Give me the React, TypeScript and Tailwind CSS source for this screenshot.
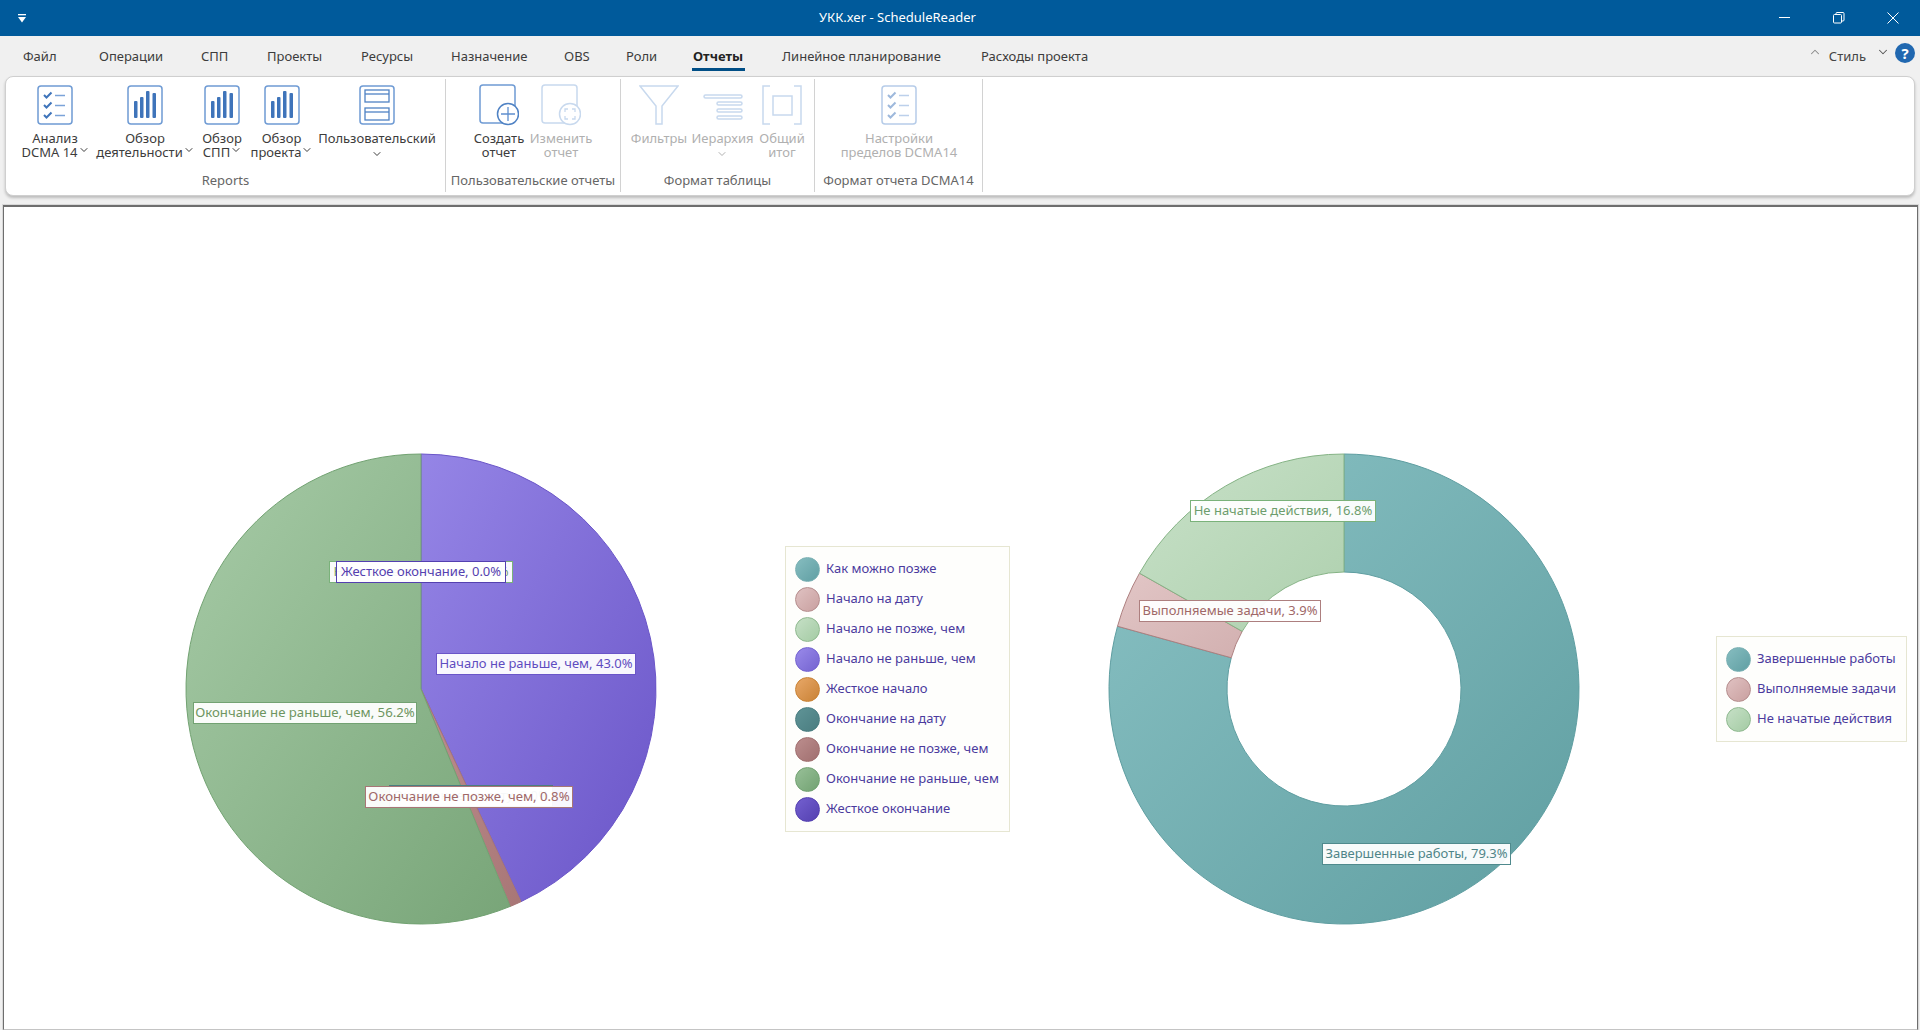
import { ChevronDown, ChevronUp } from 'lucide-react'

const FONT = "font-['Noto_Sans','Open_Sans',sans-serif]"

function polar(cx: number, cy: number, r: number, pct: number) {
    const a = (pct / 100) * Math.PI * 2
    return [cx + r * Math.sin(a), cy - r * Math.cos(a)]
}

function slicePath(from: number, to: number, r: number, inner = 0) {
    const c = 236
    const large = to - from > 50 ? 1 : 0
    const [x1, y1] = polar(c, c, r, from)
    const [x2, y2] = polar(c, c, r, to)
    if (!inner) return `M${c} ${c}L${x1} ${y1}A${r} ${r} 0 ${large} 1 ${x2} ${y2}Z`
    const [x3, y3] = polar(c, c, inner, to)
    const [x4, y4] = polar(c, c, inner, from)
    return `M${x1} ${y1}A${r} ${r} 0 ${large} 1 ${x2} ${y2}L${x3} ${y3}A${inner} ${inner} 0 ${large} 0 ${x4} ${y4}Z`
}

function Grad({ id, a, b }: { id: string; a: string; b: string }) {
    return (
        <linearGradient id={id} x1="0" y1="0" x2="1" y2="1">
            <stop offset="0" stopColor={a} />
            <stop offset="1" stopColor={b} />
        </linearGradient>
    )
}

function ChecklistIcon({ faded }: { faded?: boolean }) {
    return (
        <svg width="36" height="40" viewBox="0 0 36 40" fill="none" className={faded ? 'opacity-50' : ''}>
            <rect x="1" y="1" width="34" height="38" rx="3" stroke="#6f9bd4" strokeWidth="1.5" />
            {[10, 20, 30].map((y) => (
                <g key={y}>
                    <path d={`M7 ${y}l2.5 2.5 5-5`} stroke="#3f74ba" strokeWidth="2" />
                    <path d={`M18 ${y + 0.5}h10`} stroke="#7ba3d8" strokeWidth="1.5" />
                </g>
            ))}
        </svg>
    )
}

function BarsIcon() {
    return (
        <svg width="36" height="40" viewBox="0 0 36 40" fill="none">
            <rect x="1" y="1" width="34" height="38" rx="3" stroke="#6f9bd4" strokeWidth="1.5" />
            <rect x="7" y="16" width="3.5" height="17" rx="1" fill="#3f74ba" />
            <rect x="13" y="12" width="3.5" height="21" rx="1" fill="#3f74ba" />
            <rect x="19" y="6" width="3.5" height="27" rx="1" fill="#3f74ba" />
            <rect x="25.5" y="8" width="3.5" height="25" rx="1" fill="#3f74ba" />
        </svg>
    )
}

function TableIcon() {
    return (
        <svg width="36" height="40" viewBox="0 0 36 40" fill="none">
            <rect x="1" y="1" width="34" height="38" rx="3" stroke="#6f9bd4" strokeWidth="1.5" />
            <rect x="6" y="5" width="24" height="12" stroke="#4f82c4" strokeWidth="1.3" />
            <path d="M6 9h24" stroke="#4f82c4" strokeWidth="1.3" />
            <rect x="6" y="23" width="24" height="12" stroke="#4f82c4" strokeWidth="1.3" />
            <path d="M6 27h24" stroke="#4f82c4" strokeWidth="1.3" />
        </svg>
    )
}

function NewReportIcon() {
    return (
        <svg width="40" height="42" viewBox="0 0 40 42" fill="none">
            <rect x="1" y="1" width="35" height="38" rx="3" stroke="#6f9bd4" strokeWidth="1.5" />
            <circle cx="29" cy="30" r="10.5" fill="#fff" stroke="#4f82c4" strokeWidth="1.5" />
            <path d="M29 23v14M22 30h14" stroke="#5f8fce" strokeWidth="1.3" />
        </svg>
    )
}

function EditReportIcon() {
    return (
        <svg width="40" height="42" viewBox="0 0 40 42" fill="none">
            <rect x="1" y="1" width="35" height="38" rx="3" stroke="#c8d9ee" strokeWidth="1.5" />
            <circle cx="29" cy="30" r="10.5" fill="#fff" stroke="#c8d9ee" strokeWidth="1.5" />
            <path d="M24 28v-3h3M31 25h3v3M34 32v3h-3M27 35h-3v-3" stroke="#c8d9ee" strokeWidth="1.3" />
        </svg>
    )
}

function FilterIcon() {
    return (
        <svg width="40" height="40" viewBox="0 0 40 40" fill="none">
            <path d="M1 1h38L23 21v18h-6V21z" stroke="#c8d9ee" strokeWidth="1.5" />
        </svg>
    )
}

function HierarchyIcon() {
    return (
        <svg width="40" height="40" viewBox="0 0 40 40" fill="none" stroke="#c8d9ee" strokeWidth="1.5">
            <rect x="1" y="10" width="38" height="3" rx="1.5" />
            <rect x="14" y="17" width="25" height="3" rx="1.5" />
            <rect x="14" y="24" width="25" height="3" rx="1.5" />
            <rect x="14" y="31" width="25" height="3" rx="1.5" />
        </svg>
    )
}

function TotalIcon() {
    return (
        <svg width="40" height="40" viewBox="0 0 40 40" fill="none" stroke="#c8d9ee" strokeWidth="1.5">
            <path d="M8 1H1v38h7M32 1h7v38h-7" />
            <rect x="11" y="11" width="19" height="19" />
        </svg>
    )
}

type RibbonButton = {
    width: string
    icon: React.ReactNode
    lines: string[]
    arrow?: 'inline' | 'below'
    faded?: boolean
}

function Button({ b }: { b: RibbonButton }) {
    const color = b.faded ? 'text-[#b0b0b0]' : 'text-[#3c3c3c]'
    return (
        <div className={`flex flex-col items-center shrink-0 ${b.width}`}>
            <div className="h-[40px] flex items-center justify-center">{b.icon}</div>
            <div className={`mt-[6px] text-[13px] leading-[14px] text-center whitespace-nowrap ${color}`}>
                {b.lines.map((line, i) => (
                    <div key={line} className="flex items-center justify-center">
                        {line}
                        {b.arrow === 'inline' && i === b.lines.length - 1 && (
                            <ChevronDown className="w-[12px] h-[12px] -mt-[4px] -mr-[1px]" strokeWidth={2} />
                        )}
                    </div>
                ))}
                {b.arrow === 'below' && (
                    <div className="flex justify-center">
                        <ChevronDown className="w-[12px] h-[12px] mt-[3px]" strokeWidth={2} />
                    </div>
                )}
            </div>
        </div>
    )
}

function Group({ width, px, label, buttons }: { width: string; px: string; label: string; buttons: RibbonButton[] }) {
    return (
        <div className={`h-[113px] border-r border-[#d2d2d2] flex flex-col shrink-0 ${width}`}>
            <div className={`flex pt-[6px] h-[92px] ${px}`}>
                {buttons.map((b) => (
                    <Button key={b.lines.join()} b={b} />
                ))}
            </div>
            <div className="text-[13px] leading-[18px] text-center text-[#666] whitespace-nowrap">{label}</div>
        </div>
    )
}

const legendA = [
    { name: 'Как можно позже', c: 'from-[#86bdc0] to-[#609fa3] border-[#7ab0b3]' },
    { name: 'Начало на дату', c: 'from-[#e0c2c2] to-[#c9a0a0] border-[#b58d8d]' },
    { name: 'Начало не позже, чем', c: 'from-[#c6e0c6] to-[#a4cba4] border-[#8fb98f]' },
    { name: 'Начало не раньше, чем', c: 'from-[#9a8aea] to-[#7463d0] border-[#7463d0]' },
    { name: 'Жесткое начало', c: 'from-[#e8a868] to-[#c98234] border-[#c98234]' },
    { name: 'Окончание на дату', c: 'from-[#5f9497] to-[#4a7d80] border-[#4a7d80]' },
    { name: 'Окончание не позже, чем', c: 'from-[#bc8e8e] to-[#a06f6f] border-[#a06f6f]' },
    { name: 'Окончание не раньше, чем', c: 'from-[#98c098] to-[#72a272] border-[#72a272]' },
    { name: 'Жесткое окончание', c: 'from-[#7460d0] to-[#5440b0] border-[#5440b0]' },
]

const legendB = [
    { name: 'Завершенные работы', c: 'from-[#86bdc0] to-[#609fa3] border-[#7ab0b3]' },
    { name: 'Выполняемые задачи', c: 'from-[#e0c2c2] to-[#c9a0a0] border-[#b58d8d]' },
    { name: 'Не начатые действия', c: 'from-[#c6e0c6] to-[#a4cba4] border-[#8fb98f]' },
]

function Legend({ items, width, ml }: { items: { name: string; c: string }[]; width: string; ml: string }) {
    return (
        <div className={`shrink-0 border border-[#e6e6d2] bg-[#fefefc] px-[9px] py-[7px] ${width} ${ml}`}>
            {items.map((it) => (
                <div key={it.name} className="h-[30px] flex items-center gap-[6px]">
                    <div className={`w-[25px] h-[25px] rounded-full border bg-gradient-to-br ${it.c}`} />
                    <span className="text-[13px] text-[#4b3b9e] whitespace-nowrap">{it.name}</span>
                </div>
            ))}
        </div>
    )
}

function Label({ text, c }: { text: string; c: string }) {
    return (
        <div className={`absolute h-[22px] flex items-center justify-center bg-white/95 border whitespace-nowrap overflow-hidden ${c}`}>
            {text}
        </div>
    )
}

export default function App() {
    return (
        <div className={`w-[1920px] h-[1030px] overflow-hidden flex flex-col bg-[#f0f0f0] ${FONT}`}>
            {/* title bar */}
            <div className="h-[36px] shrink-0 bg-[#005a9b] flex items-center text-white">
                <svg width="8" height="9" viewBox="0 0 8 9" className="ml-[18px]" fill="#fff">
                    <rect x="0" y="0" width="8" height="1.3" />
                    <path d="M0 3h8L4 8.5z" />
                </svg>
                <div className="ml-[793px] text-[13px] whitespace-nowrap">УКК.xer - ScheduleReader</div>
                <div className="ml-auto flex items-center">
                    <svg width="12" height="12" viewBox="0 0 12 12" stroke="#fff" fill="none">
                        <path d="M0 5.5h11" />
                    </svg>
                    <svg width="12" height="12" viewBox="0 0 12 12" stroke="#fff" fill="none" className="ml-[42px]">
                        <rect x="0.5" y="2.5" width="8" height="8.5" rx="1" />
                        <path d="M3 2.5V1.5a1 1 0 0 1 1-1h6a1 1 0 0 1 1 1v6.5a1 1 0 0 1-1 1H8.5" />
                    </svg>
                    <svg width="12" height="12" viewBox="0 0 12 12" stroke="#fff" fill="none" className="ml-[42px] mr-[21px]">
                        <path d="M0.5 0.5l11 11M11.5 0.5l-11 11" />
                    </svg>
                </div>
            </div>

            {/* menu row */}
            <div className="h-[40px] shrink-0 flex items-center text-[13px] text-[#3c3c3c] pl-[23px] pt-[1px]">
                <span className="w-[76px]">Файл</span>
                <span className="w-[102px]">Операции</span>
                <span className="w-[66px]">СПП</span>
                <span className="w-[94px]">Проекты</span>
                <span className="w-[90px]">Ресурсы</span>
                <span className="w-[113px]">Назначение</span>
                <span className="w-[62px]">OBS</span>
                <span className="w-[67px]">Роли</span>
                <span className="relative w-[89px] font-bold text-[#222]">
                    Отчеты
                    <span className="absolute left-[-1px] top-[21px] w-[53px] h-[3px] bg-[#004e86]" />
                </span>
                <span className="w-[199px]">Линейное планирование</span>
                <span>Расходы проекта</span>
                <div className="ml-auto flex items-center text-[#555]">
                    <ChevronUp className="w-[14px] h-[14px] -mt-[10px] text-[#888]" strokeWidth={1.75} />
                    <span className="ml-[7px] mt-[1px] text-[13px] text-[#444]">Стиль</span>
                    <ChevronDown className="w-[14px] h-[14px] ml-[10px] -mt-[10px]" strokeWidth={1.75} />
                    <div className="ml-[5px] mr-[5px] -mt-[7px] w-[20px] h-[20px] rounded-full bg-[#2168b0] text-white text-[15px] font-bold leading-[20px] text-center">?</div>
                </div>
            </div>

            {/* ribbon */}
            <div className="h-[120px] shrink-0 ml-[5px] mr-[5px] bg-white border border-[#cfcfcf] rounded-[8px] shadow-[0_2px_3px_rgba(0,0,0,0.22)] flex pt-[2px]">
                <Group
                    width="w-[440px]"
                    px="pl-[8px]"
                    label="Reports"
                    buttons={[
                        { width: 'w-[82px]', icon: <ChecklistIcon />, lines: ['Анализ', 'DCMA 14'], arrow: 'inline' },
                        { width: 'w-[98px]', icon: <BarsIcon />, lines: ['Обзор', 'деятельности'], arrow: 'inline' },
                        { width: 'w-[56px]', icon: <BarsIcon />, lines: ['Обзор', 'СПП'], arrow: 'inline' },
                        { width: 'w-[63px]', icon: <BarsIcon />, lines: ['Обзор', 'проекта'], arrow: 'inline' },
                        { width: 'w-[128px]', icon: <TableIcon />, lines: ['Пользовательский'], arrow: 'below' },
                    ]}
                />
                <Group
                    width="w-[175px]"
                    px="pl-[22px]"
                    label="Пользовательские отчеты"
                    buttons={[
                        { width: 'w-[62px]', icon: <NewReportIcon />, lines: ['Создать', 'отчет'] },
                        { width: 'w-[62px]', icon: <EditReportIcon />, lines: ['Изменить', 'отчет'], faded: true },
                    ]}
                />
                <Group
                    width="w-[194px]"
                    px="pl-[7px]"
                    label="Формат таблицы"
                    buttons={[
                        { width: 'w-[62px]', icon: <FilterIcon />, lines: ['Фильтры'], faded: true },
                        { width: 'w-[65px]', icon: <HierarchyIcon />, lines: ['Иерархия'], arrow: 'below', faded: true },
                        { width: 'w-[54px]', icon: <TotalIcon />, lines: ['Общий', 'итог'], faded: true },
                    ]}
                />
                <Group
                    width="w-[168px]"
                    px="pl-[0px]"
                    label="Формат отчета DCMA14"
                    buttons={[
                        { width: 'w-[168px]', icon: <ChecklistIcon faded />, lines: ['Настройки', 'пределов DCMA14'], faded: true },
                    ]}
                />
            </div>

            {/* chart area */}
            <div className="mt-[9px] flex-1 min-h-0 ml-[3px] mr-[2px] bg-white border-t-2 border-l border-r border-b border-[#6e6e6e] border-b-[#c4c4c4] shadow-[0_0_0_1px_#d8d8d8] flex items-center pt-[142px]">
                <div className="relative w-[472px] h-[472px] shrink-0 ml-[181px]">
                    <svg width="472" height="472" viewBox="0 0 472 472">
                        <defs>
                            <Grad id="purple" a="#9585e6" b="#6a55c8" />
                            <Grad id="rose" a="#bd8f8f" b="#a87676" />
                            <Grad id="green" a="#a7cba7" b="#78a578" />
                        </defs>
                        <path d={slicePath(0, 43, 235)} fill="url(#purple)" stroke="#6a55c8" />
                        <path d={slicePath(43, 43.8, 235)} fill="url(#rose)" stroke="#a87676" />
                        <path d={slicePath(43.8, 100, 235)} fill="url(#green)" stroke="#72a272" />
                    </svg>
                    <Label text="Начало не позже, чем, 0.0%" c="text-[13px] left-[144px] top-[108px] w-[184px] border-[#7ab27a] text-[#6d9d6d]" />
                    <Label text="Жесткое окончание, 0.0%" c="text-[13px] left-[151px] top-[108px] w-[170px] border-[#5440b0] text-[#5440b0]" />
                    <Label text="Начало не раньше, чем, 43.0%" c="text-[13px] left-[251px] top-[200px] w-[200px] border-[#6a55c8] text-[#5f4cc0]" />
                    <Label text="Окончание не раньше, чем, 56.2%" c="text-[13.2px] left-[8px] top-[249px] w-[224px] border-[#72a272] text-[#6d9560]" />
                    <Label text="Окончание на дату, 0.0%" c="text-[13px] left-[204px] top-[332px] w-[164px] border-[#4a7d80] text-[#4a7d80]" />
                    <Label text="Окончание не позже, чем, 0.8%" c="text-[13.2px] left-[180px] top-[333px] w-[208px] border-[#a87676] text-[#a06868]" />
                </div>
                <Legend items={legendA} width="w-[225px]" ml="ml-[128px]" />
                <div className="relative w-[472px] h-[472px] shrink-0 ml-[98px]">
                    <svg width="472" height="472" viewBox="0 0 472 472">
                        <defs>
                            <Grad id="teal" a="#8ac2c4" b="#5f9ea1" />
                            <Grad id="rose2" a="#e2c6c6" b="#d2b0b0" />
                            <Grad id="green2" a="#c8e1c8" b="#aed0ae" />
                        </defs>
                        <path d={slicePath(0, 79.3, 235, 117)} fill="url(#teal)" stroke="#5f9ea1" />
                        <path d={slicePath(79.3, 83.2, 235, 117)} fill="url(#rose2)" stroke="#ad7f7f" />
                        <path d={slicePath(83.2, 100, 235, 117)} fill="url(#green2)" stroke="#85b385" />
                    </svg>
                    <Label text="Не начатые действия, 16.8%" c="text-[13px] left-[82px] top-[47px] w-[186px] border-[#7ab27a] text-[#6d9d6d]" />
                    <Label text="Выполняемые задачи, 3.9%" c="text-[13px] left-[31px] top-[147px] w-[182px] border-[#ad7f7f] text-[#a06868]" />
                    <Label text="Завершенные работы, 79.3%" c="text-[13px] left-[214px] top-[390px] w-[189px] border-[#4f8a8d] text-[#4f8588]" />
                </div>
                <Legend items={legendB} width="w-[191px]" ml="ml-[136px]" />
            </div>
        </div>
    )
}
